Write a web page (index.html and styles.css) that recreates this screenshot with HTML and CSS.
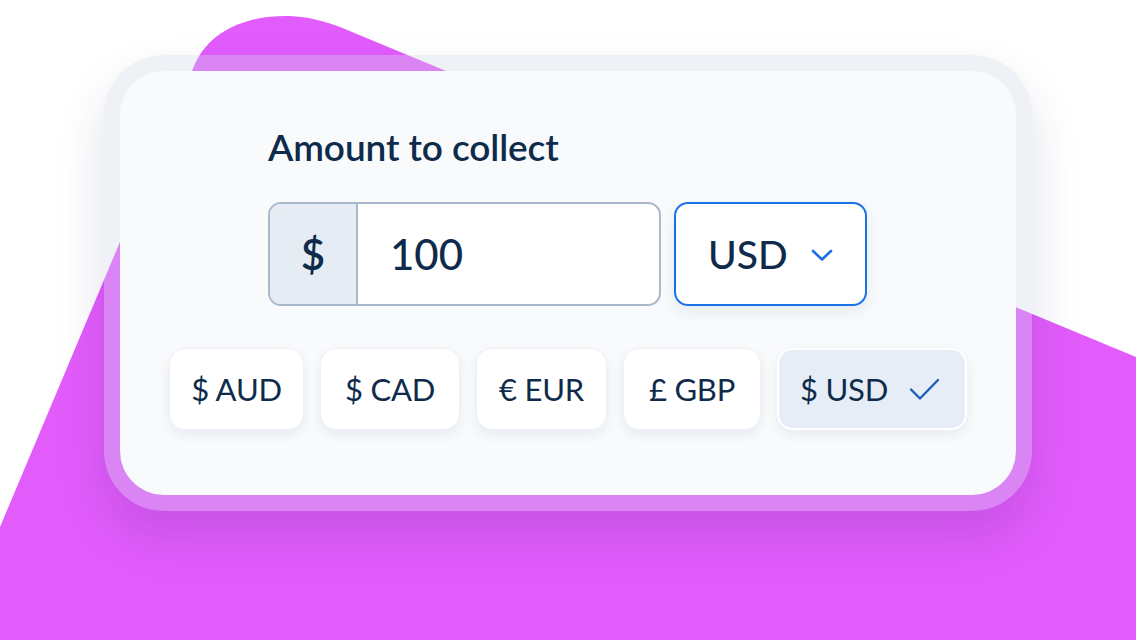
FILE: index.html
```html
<!DOCTYPE html>
<html lang="en">
<head>
    <meta charset="UTF-8">
    <meta name="viewport" content="width=device-width, initial-scale=1.0">
    <title>Amount to collect</title>
    <link rel="stylesheet" href="styles.css">
</head>
<body>
    <div class="stage">
        <!-- purple backdrop shape -->
        <svg class="blob" width="1136" height="640" viewBox="0 0 1136 640" aria-hidden="true">
            <path d="M0 527 L194 66 C212 24 258 15 290 16 C314 17 334 24 352 32 L1136 357 L1136 640 L0 640 Z" fill="#e25cfc"/>
        </svg>

        <div class="frame">
            <div class="card">
                <div class="amount">
                    <h1 class="amount-title">Amount to collect</h1>
                    <div class="amount-row">
                        <div class="input-group">
                            <span class="addon">$</span>
                            <span class="value">100</span>
                        </div>
                        <button class="select" type="button">
                            <span>USD</span>
                            <svg class="chevron" width="22" height="13" viewBox="0 0 22 13">
                                <path d="M2 2 L11 10.5 L20 2" fill="none" stroke="#1b6fe0" stroke-width="2.6" stroke-linecap="round" stroke-linejoin="round"/>
                            </svg>
                        </button>
                    </div>
                </div>

                <div class="chips">
                    <button class="chip chip-aud" type="button">$ AUD</button>
                    <button class="chip chip-cad" type="button">$ CAD</button>
                    <button class="chip chip-eur" type="button">&euro; EUR</button>
                    <button class="chip chip-gbp" type="button">&pound; GBP</button>
                    <button class="chip chip-usd chip-selected" type="button">
                        <span>$ USD</span>
                        <svg class="check" width="31" height="23" viewBox="0 0 31 23">
                            <path d="M2 11.5 L11 20.5 L29 2" fill="none" stroke="#1d5fb8" stroke-width="2.4" stroke-linecap="round" stroke-linejoin="round"/>
                        </svg>
                    </button>
                </div>
            </div>
        </div>
    </div>
</body>
</html>
```

FILE: styles.css
```css
body {
    margin: 0;
    background: #ffffff;
    font-family: Lato, "Open Sans", sans-serif;
    color: #0f2b4b;
}

.stage {
    position: relative;
    width: 1136px;
    height: 640px;
    overflow: hidden;
    padding: 55px 0 0 104px;
    box-sizing: border-box;
}

.blob {
    position: absolute;
    top: 0;
    left: 0;
}

.frame {
    position: relative;
    width: 928px;
    padding: 16px;
    box-sizing: border-box;
    border-radius: 60px;
    background: rgba(206, 214, 230, 0.34);
    box-shadow: 0 26px 50px rgba(40, 30, 90, 0.14);
}

.card {
    height: 424px;
    padding: 54px 0 0 49px;
    box-sizing: border-box;
    border-radius: 44px;
    background: #f8fafc;
}

.amount {
    margin-left: 99px;
}

.amount-title {
    margin: 0 0 33px;
    font-size: 37px;
    line-height: 44px;
    font-weight: 600;
    letter-spacing: -0.1px;
}

.amount-row {
    display: flex;
    gap: 13px;
}

.input-group {
    display: flex;
    width: 393px;
    height: 104px;
    box-sizing: border-box;
    border: 2px solid #a9b9cb;
    border-radius: 13px;
    background: #ffffff;
    overflow: hidden;
}

.addon {
    display: flex;
    align-items: center;
    justify-content: center;
    width: 86px;
    border-right: 2px solid #a9b9cb;
    background: #e6ecf4;
    font-size: 42px;
    font-weight: 600;
}

.value {
    display: flex;
    align-items: center;
    padding-left: 32px;
    font-size: 42px;
    font-weight: 500;
}

.select {
    display: flex;
    align-items: center;
    gap: 23px;
    width: 193px;
    height: 104px;
    padding: 0 0 0 32px;
    box-sizing: border-box;
    border: 2px solid #1a73e6;
    border-radius: 14px;
    background: #ffffff;
    box-shadow: 0 6px 14px rgba(30, 50, 90, 0.08);
    font-family: inherit;
    font-size: 39px;
    font-weight: 500;
    color: #0f2b4b;
}

.chevron {
    margin-top: 2px;
}

.chips {
    display: flex;
    gap: 16px;
    margin-top: 42px;
}

.chip {
    display: flex;
    align-items: center;
    justify-content: center;
    gap: 21px;
    height: 82px;
    padding: 0;
    box-sizing: border-box;
    border: 1px solid #edf1f6;
    border-radius: 16px;
    background: #ffffff;
    box-shadow: 0 5px 12px rgba(30, 50, 90, 0.07);
    font-family: inherit;
    font-size: 31px;
    font-weight: 400;
    letter-spacing: -0.2px;
    color: #0f2b4b;
}

.chip-aud {
    width: 135px;
}

.chip-cad {
    width: 140px;
}

.chip-eur {
    width: 131px;
}

.chip-gbp {
    width: 138px;
}

.chip-usd {
    width: 190px;
}

.chip-selected {
    justify-content: flex-start;
    padding-left: 21px;
    border: 2px solid #ffffff;
    background: #e7edf6;
}
```
